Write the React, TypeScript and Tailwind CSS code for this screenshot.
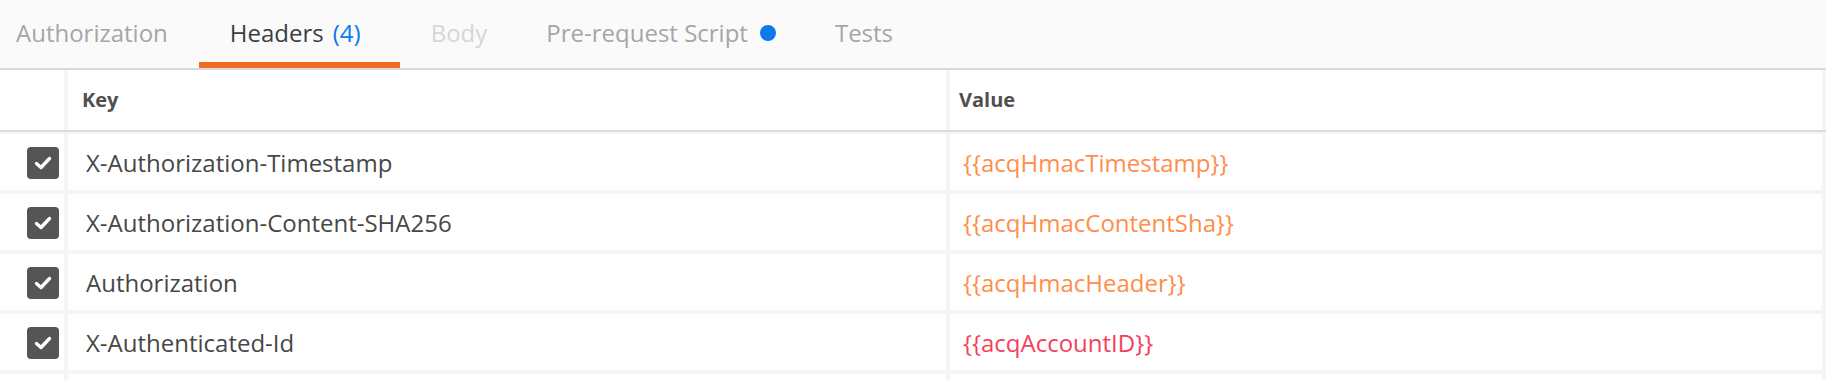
import React from "react";

const tabs = [
    { name: "Authorization", cls: "pl-[16px] pr-[31px] text-[#a6a6a6]" },
    { name: "Headers", count: "(4)", active: true, cls: "pl-[31px] pr-[39px] text-[#3d3d3d]" },
    { name: "Body", cls: "pl-[31px] pr-[28px] text-[#d6d6d6]" },
    { name: "Pre-request Script", dot: true, cls: "pl-[31px] pr-[28px] text-[#a6a6a6]" },
    { name: "Tests", cls: "px-[31px] text-[#a6a6a6]" },
];

const rows = [
    { key: "X-Authorization-Timestamp", value: "{{acqHmacTimestamp}}", color: "text-[#ff8d4b]" },
    { key: "X-Authorization-Content-SHA256", value: "{{acqHmacContentSha}}", color: "text-[#ff8d4b]" },
    { key: "Authorization", value: "{{acqHmacHeader}}", color: "text-[#ff8d4b]" },
    { key: "X-Authenticated-Id", value: "{{acqAccountID}}", color: "text-[#f5405c]" },
];

function Check() {
    return (
        <div className="w-[32px] h-[32px] rounded-[4px] bg-[#555555] flex items-center justify-center">
            <svg width="20" height="20" viewBox="0 0 20 20" fill="none">
                <path d="M3.5 10.5 L8 14.5 L16.5 5.5" stroke="#ffffff" strokeWidth="3.4" strokeLinecap="round" strokeLinejoin="round" />
            </svg>
        </div>
    );
}

const App = () => {
    return (
        <div className="w-[1826px] h-[380px] overflow-hidden bg-[#f5f5f5]" style={{ fontFamily: "'Open Sans', 'Liberation Sans', sans-serif" }}>
            {/* tab bar */}
            <div className="flex h-[70px] bg-[#fafafa] border-b-2 border-[#d9d9d9]">
                {tabs.map(tab => (
                    <div
                        key={tab.name}
                        className={`h-[68px] flex items-center pt-[3px] text-[24px] border-b-[6px] ${tab.active ? "border-[#f26b22]" : "border-transparent"} ${tab.cls}`}
                    >
                        {tab.name}
                        {tab.count && <span className="ml-[9px] text-[#097bed]">{tab.count}</span>}
                        {tab.dot && <span className="ml-[12px] w-[16px] h-[16px] rounded-full bg-[#097bed]" />}
                    </div>
                ))}
            </div>

            {/* table header */}
            <div className="grid grid-cols-[64px_878px_872px] gap-x-[4px] border-b-2 border-[#dcdcdc] h-[62px]">
                <div className="bg-white" />
                <div className="bg-white flex items-center pl-[14px] text-[20px] font-bold text-[#505050]">Key</div>
                <div className="bg-white flex items-center pl-[9px] text-[20px] font-bold text-[#505050]">Value</div>
            </div>

            {/* rows */}
            <div className="flex flex-col gap-y-[4px] pt-[2px]">
                {rows.map(row => (
                    <div key={row.key} className="grid grid-cols-[64px_878px_872px] gap-x-[4px] h-[56px]">
                        <div className="bg-white flex items-center pl-[27px] pt-[2px]">
                            <Check />
                        </div>
                        <div className="bg-white flex items-center pl-[18px] pt-[2px] text-[24px] text-[#474747]">{row.key}</div>
                        <div className={`bg-white flex items-center pl-[13px] pt-[2px] text-[24px] ${row.color}`}>{row.value}</div>
                    </div>
                ))}
                <div className="grid grid-cols-[64px_878px_872px] gap-x-[4px] h-[56px]">
                    <div className="bg-white" />
                    <div className="bg-white" />
                    <div className="bg-white" />
                </div>
            </div>
        </div>
    );
};

export default App;
